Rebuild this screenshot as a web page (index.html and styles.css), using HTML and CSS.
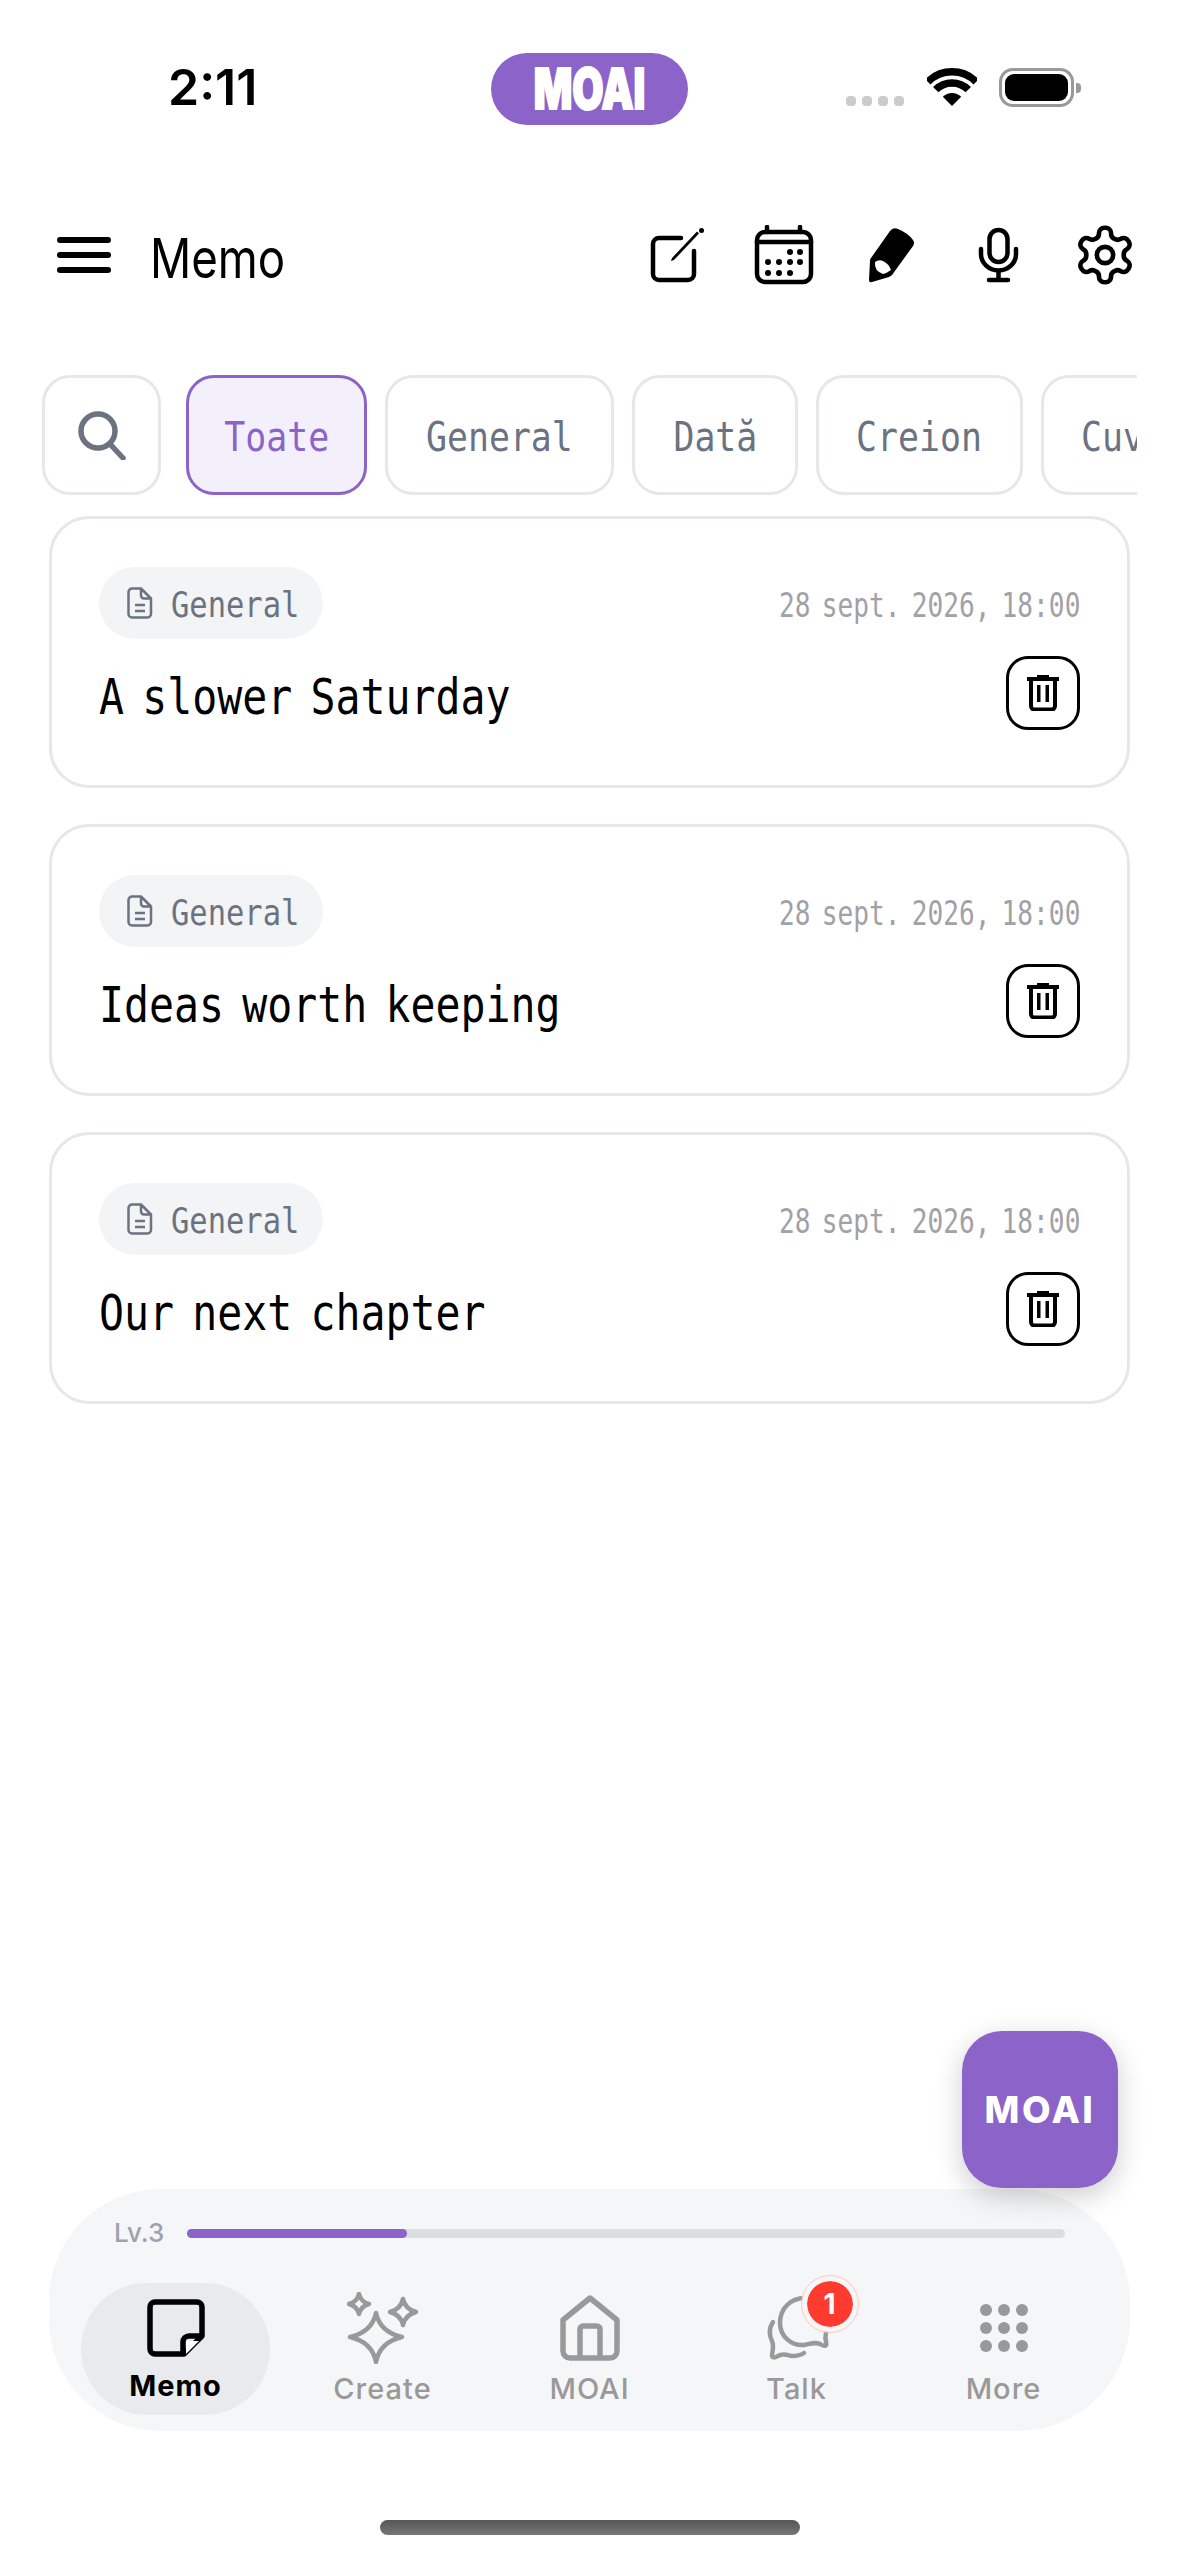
FILE: index.html
```html
<!DOCTYPE html>
<html lang="en">
<head>
    <meta charset="UTF-8">
    <meta name="viewport" content="width=device-width, initial-scale=1.0">
    <title>MOAI Memo</title>
    <link rel="stylesheet" href="styles.css">
</head>
<body>
    <div class="screen">
        <div class="status-bar">
            <span class="clock">2:11</span>
            <div class="island"><span class="island-text">MOAI</span></div>
            <div class="status-icons">
                <div class="signal"><i></i><i></i><i></i><i></i></div>
                <svg class="wifi" viewBox="0 0 50 38"><path d="M.8 13.800a34.250 34.250 0 0 1 48.400 0M8.700 21.700a23 23 0 0 1 32.600 0" fill="none" stroke="#000" stroke-width="7.500"/><path d="M25 38l-9.200-9.200a13 13 0 0 1 18.400 0z"/></svg>
                <div class="battery"><div class="battery-fill"></div></div>
            </div>
        </div>

        <header class="app-header">
            <div class="menu-icon"><i></i><i></i><i></i></div>
            <h1 class="page-title"><span class="title-text">Memo</span></h1>
            <div class="header-actions">
                <svg viewBox="0 0 60 60" class="head-icon"><path d="M34 13H12a6 6 0 0 0-6 6v30a6 6 0 0 0 6 6h29a6 6 0 0 0 6-6V26" fill="none" stroke="#000" stroke-width="4.500" stroke-linecap="round"/><path d="M24 36l1-3L50 6.500l2 2L27 35z"/><circle cx="54.500" cy="5.500" r="2.500"/></svg>
                <svg viewBox="0 0 60 60" class="head-icon"><rect x="3" y="7" width="54" height="50" rx="8" fill="none" stroke="#000" stroke-width="4.500"/><path d="M3 17h54M13 2v5M46 2v5" stroke="#000" stroke-width="4.500" stroke-linecap="round"/><g><circle cx="36" cy="27" r="3"/><circle cx="46" cy="27" r="3"/><circle cx="14" cy="37" r="3"/><circle cx="25" cy="37" r="3"/><circle cx="36" cy="37" r="3"/><circle cx="46" cy="37" r="3"/><circle cx="14" cy="48" r="3"/><circle cx="25" cy="48" r="3"/><circle cx="36" cy="48" r="3"/></g></svg>
                <svg viewBox="0 0 60 60" class="head-icon"><path d="M29 6q3-4 8-2 10 4 15 11 2 3 0 6L31 50q-1 1-3 2L11 57q-3 1-3-2l1-19q0-2 1-3z"/><path d="M14 37q4-3 8-1 6 3 8 9-4 3-8 4-9-3-8-12z" fill="#fff"/></svg>
                <svg viewBox="0 0 60 60" class="head-icon"><rect x="21.500" y="5" width="18" height="32" rx="9" fill="none" stroke="#000" stroke-width="4.500"/><path d="M13 24v5a17.500 16.500 0 0 0 35 0v-5M30.500 46v9M21 55h19" fill="none" stroke="#000" stroke-width="4.500" stroke-linecap="round"/></svg>
                <svg viewBox="1 1 22 22" class="head-icon" fill="none" stroke="#000" stroke-width="1.700" stroke-linecap="round" stroke-linejoin="round"><path d="M12.220 2h-.44a2 2 0 0 0-2 2v.18a2 2 0 0 1-1 1.730l-.43.25a2 2 0 0 1-2 0l-.15-.08a2 2 0 0 0-2.730.73l-.22.38a2 2 0 0 0 .73 2.730l.15.1a2 2 0 0 1 1 1.720v.51a2 2 0 0 1-1 1.740l-.15.09a2 2 0 0 0-.73 2.730l.22.38a2 2 0 0 0 2.730.73l.15-.08a2 2 0 0 1 2 0l.43.25a2 2 0 0 1 1 1.730V20a2 2 0 0 0 2 2h.44a2 2 0 0 0 2-2v-.18a2 2 0 0 1 1-1.730l.43-.25a2 2 0 0 1 2 0l.15.08a2 2 0 0 0 2.730-.73l.22-.39a2 2 0 0 0-.73-2.730l-.15-.08a2 2 0 0 1-1-1.740v-.5a2 2 0 0 1 1-1.740l.15-.09a2 2 0 0 0 .73-2.730l-.22-.38a2 2 0 0 0-2.730-.73l-.15.08a2 2 0 0 1-2 0l-.43-.25a2 2 0 0 1-1-1.730V4a2 2 0 0 0-2-2z"/><circle cx="12" cy="12" r="3"/></svg>
            </div>
        </header>

        <div class="filter-row">
            <div class="chip chip-search">
                <svg viewBox="0 0 50 50" class="search-icon"><circle cx="21" cy="21" r="17" fill="none" stroke="#6b7280" stroke-width="5.500"/><path d="M33 34l13 14" stroke="#6b7280" stroke-width="5.500" stroke-linecap="round"/></svg>
            </div>
            <div class="chip chip-5 active"><span class="squeeze">Toate</span></div>
            <div class="chip chip-7"><span class="squeeze">General</span></div>
            <div class="chip chip-4"><span class="squeeze">Dată</span></div>
            <div class="chip chip-6"><span class="squeeze">Creion</span></div>
            <div class="chip chip-6"><span class="squeeze">Cuvânt</span></div>
        </div>

        <div class="memo-list">
            <article class="memo-card">
                <div class="memo-top">
                    <div class="tag">
                        <svg viewBox="0 0 26 32" class="doc-icon"><path d="M5 1.500h9l10 10V27a3.500 3.500 0 0 1-3.500 3.500H5A3.500 3.500 0 0 1 1.500 27V5A3.500 3.500 0 0 1 5 1.500zM14 1.500v7a3 3 0 0 0 3 3h7M8 18h10M8 24h10" fill="none" stroke="#6b7280" stroke-width="2.500" stroke-linejoin="round"/></svg>
                        <span class="squeeze tag-text">General</span>
                    </div>
                    <span class="squeeze memo-date">28 sept. 2026, 18:00</span>
                </div>
                <div class="memo-bottom">
                    <span class="squeeze memo-title">A slower Saturday</span>
                    <button class="trash-btn"><svg viewBox="0 0 32 36" class="trash-icon"><path d="M0 2h10V0h12v2h10v4H0zM10 10h3.500v17H10zM18.500 10H22v17h-3.500z"/><path d="M4 6v25a3.500 3.500 0 0 0 3.500 3.500h17a3.500 3.500 0 0 0 3.500-3.500V6" fill="none" stroke="#000" stroke-width="4"/></svg></button>
                </div>
            </article>

            <article class="memo-card">
                <div class="memo-top">
                    <div class="tag">
                        <svg viewBox="0 0 26 32" class="doc-icon"><path d="M5 1.500h9l10 10V27a3.500 3.500 0 0 1-3.500 3.500H5A3.500 3.500 0 0 1 1.500 27V5A3.500 3.500 0 0 1 5 1.500zM14 1.500v7a3 3 0 0 0 3 3h7M8 18h10M8 24h10" fill="none" stroke="#6b7280" stroke-width="2.500" stroke-linejoin="round"/></svg>
                        <span class="squeeze tag-text">General</span>
                    </div>
                    <span class="squeeze memo-date">28 sept. 2026, 18:00</span>
                </div>
                <div class="memo-bottom">
                    <span class="squeeze memo-title">Ideas worth keeping</span>
                    <button class="trash-btn"><svg viewBox="0 0 32 36" class="trash-icon"><path d="M0 2h10V0h12v2h10v4H0zM10 10h3.500v17H10zM18.500 10H22v17h-3.500z"/><path d="M4 6v25a3.500 3.500 0 0 0 3.500 3.500h17a3.500 3.500 0 0 0 3.500-3.500V6" fill="none" stroke="#000" stroke-width="4"/></svg></button>
                </div>
            </article>

            <article class="memo-card">
                <div class="memo-top">
                    <div class="tag">
                        <svg viewBox="0 0 26 32" class="doc-icon"><path d="M5 1.500h9l10 10V27a3.500 3.500 0 0 1-3.500 3.500H5A3.500 3.500 0 0 1 1.500 27V5A3.500 3.500 0 0 1 5 1.500zM14 1.500v7a3 3 0 0 0 3 3h7M8 18h10M8 24h10" fill="none" stroke="#6b7280" stroke-width="2.500" stroke-linejoin="round"/></svg>
                        <span class="squeeze tag-text">General</span>
                    </div>
                    <span class="squeeze memo-date">28 sept. 2026, 18:00</span>
                </div>
                <div class="memo-bottom">
                    <span class="squeeze memo-title">Our next chapter</span>
                    <button class="trash-btn"><svg viewBox="0 0 32 36" class="trash-icon"><path d="M0 2h10V0h12v2h10v4H0zM10 10h3.500v17H10zM18.500 10H22v17h-3.500z"/><path d="M4 6v25a3.500 3.500 0 0 0 3.500 3.500h17a3.500 3.500 0 0 0 3.500-3.500V6" fill="none" stroke="#000" stroke-width="4"/></svg></button>
                </div>
            </article>
        </div>

        <nav class="tab-bar">
            <div class="level-row">
                <span class="level-label">Lv.3</span>
                <div class="level-track"><div class="level-fill" style="width: 25%"></div></div>
            </div>
            <div class="tabs">
                <div class="tab active">
                    <div class="tab-art">
                        <svg viewBox="0 0 58 58" class="tab-icon"><path d="M8 3h42a5 5 0 0 1 5 5v29L37 55H8a5 5 0 0 1-5-5V8a5 5 0 0 1 5-5z" fill="none" stroke="#000" stroke-width="5.500" stroke-linejoin="round"/><path d="M39 42h13L39 55z" fill="#fff"/><path d="M55 37H42a6 6 0 0 0-6 6v12" fill="none" stroke="#000" stroke-width="5.500"/></svg>
                    </div>
                    <span>Memo</span>
                </div>
                <div class="tab">
                    <div class="tab-art">
                        <svg viewBox="0 0 72 72" class="create-icon" fill="none" stroke="#999" stroke-width="4.500" stroke-linejoin="round"><path d="M29 21q4 19 26 24-22 5-26 25-4-20-26-25 22-5 26-24z"/><path d="M12 2q2 8 10 10-8 2-10 10-2-8-10-10 8-2 10-10z"/><path d="M56 7q2 10 13 13-11 3-13 13-2-10-13-13 11-3 13-13z"/></svg>
                    </div>
                    <span>Create</span>
                </div>
                <div class="tab">
                    <div class="tab-art">
                        <svg viewBox="0 0 60 66" class="house-icon" fill="none" stroke="#999" stroke-width="5.500" stroke-linejoin="round"><path d="M30 3L3 25v31a7 7 0 0 0 7 7h40a7 7 0 0 0 7-7V25z"/><path d="M20 63V34a3 3 0 0 1 3-3h14a3 3 0 0 1 3 3v29"/></svg>
                    </div>
                    <span>MOAI</span>
                </div>
                <div class="tab">
                    <div class="tab-art">
                        <div class="talk-icon">
                            <svg viewBox="-4 -2 70 70" class="talk-svg" fill="none" stroke="#999" stroke-width="4.500" stroke-linecap="round"><path d="M39 3C24 3 14 14 14 28c0 14 12 23 24 22 6-1 12-4 18 0 4 2 5 0 4-3-1-4-1-5 0-9"/><path d="M7 27c-4 6-4 13-1 19 2 4 1 9 0 14 0 3 3 3 6 1 5-3 9-1 14 0 4 0 9-1 12-3"/></svg>
                            <span class="badge">1</span>
                        </div>
                    </div>
                    <span>Talk</span>
                </div>
                <div class="tab">
                    <div class="tab-art">
                        <div class="dots-icon"><i></i><i></i><i></i><i></i><i></i><i></i><i></i><i></i><i></i></div>
                    </div>
                    <span>More</span>
                </div>
            </div>
        </nav>

        <button class="fab">MOAI</button>
        <div class="home-indicator"></div>
    </div>
</body>
</html>
```

FILE: styles.css
```css
* {
    margin: 0;
    padding: 0;
    box-sizing: border-box;
}

body {
    font-family: 'Inter', 'Liberation Sans', sans-serif;
    background: #fff;
    color: #000;
}

.screen {
    position: relative;
    width: 1179px;
    height: 2556px;
    display: flex;
    flex-direction: column;
    overflow: hidden;
}

/* the app font is a narrow mono, none is installed so squeeze one */
.squeeze {
    display: inline-block;
    font-family: 'DejaVu Sans Mono', monospace;
    white-space: nowrap;
    transform: scaleX(0.85);
}

/* status bar */
.status-bar {
    height: 125px;
    padding-top: 53px;
    display: flex;
    align-items: flex-start;
    position: relative;
}

.clock {
    position: absolute;
    left: 168px;
    top: 57px;
    font-size: 50px;
    font-weight: 600;
    line-height: 60px;
}

.island {
    width: 197px;
    height: 72px;
    margin-left: 491px;
    border-radius: 36px;
    background: #8c63c9;
    display: flex;
    align-items: center;
    justify-content: center;
}

.island-text {
    color: #fff;
    font-size: 56px;
    font-weight: 900;
    line-height: 72px;
    -webkit-text-stroke: 2px #fff;
    transform: scaleX(0.72);
}

.status-icons {
    position: absolute;
    left: 846px;
    top: 68px;
    display: flex;
    align-items: flex-end;
}

.signal {
    display: flex;
    gap: 6px;
    margin-bottom: 1px;
}

.signal i {
    width: 10px;
    height: 10px;
    border-radius: 4px;
    background: #ccc;
}

.wifi {
    width: 50px;
    height: 38px;
    margin-left: 23px;
    margin-bottom: 1px;
}

.battery {
    position: relative;
    width: 75px;
    height: 39px;
    margin-left: 22px;
    border: 3px solid #999;
    border-radius: 14px;
    padding: 3px;
}

.battery::after {
    content: "";
    position: absolute;
    right: -10px;
    top: 12px;
    width: 5px;
    height: 10px;
    background: #999;
    border-radius: 0 4px 4px 0;
}

.battery-fill {
    width: 100%;
    height: 100%;
    background: #000;
    border-radius: 9px;
}

/* header */
.app-header {
    height: 100px;
    margin-top: 80px;
    padding: 0 44px 0 57px;
    display: flex;
    align-items: center;
}

.menu-icon {
    width: 54px;
    display: flex;
    flex-direction: column;
    gap: 8.500px;
}

.menu-icon i {
    height: 6.500px;
    border-radius: 4px;
    background: #000;
}

.page-title {
    margin-left: 39px;
    font-size: 55px;
    font-weight: 400;
    line-height: 70px;
}

.title-text {
    display: inline-block;
    transform: scaleX(0.83);
    transform-origin: left;
    padding-top: 6px;
}

.header-actions {
    margin-left: auto;
    display: flex;
    gap: 47px;
}

.head-icon {
    width: 60px;
    height: 60px;
}

/* filter chips */
.filter-row {
    width: 1095px;
    margin-top: 70px;
    margin-left: 42px;
    display: flex;
    gap: 18px;
    overflow: hidden;
}

.chip {
    flex: none;
    height: 120px;
    padding-top: 3px;
    border: 3px solid #e5e7eb;
    border-radius: 28px;
    background: #fff;
    color: #6b7280;
    font-size: 41px;
    display: flex;
    align-items: center;
    justify-content: center;
}

.chip.active {
    border-color: #8c63c9;
    background: #f4f0fb;
    color: #8c63c9;
}

.chip-search {
    width: 119px;
    margin-right: 7px;
    padding-top: 0;
}

.chip-4 { width: 166px; }
.chip-5 { width: 181px; }
.chip-6 { width: 207px; }
.chip-7 { width: 229px; }

.search-icon {
    width: 50px;
    height: 50px;
}

/* memo cards */
.memo-list {
    margin: 21px 49px 0 49px;
    display: flex;
    flex-direction: column;
    gap: 36px;
}

.memo-card {
    height: 272px;
    padding: 48px 47px 0;
    border: 3px solid #e5e7eb;
    border-radius: 40px;
}

.memo-top {
    display: flex;
    align-items: center;
    justify-content: space-between;
}

.tag {
    width: 224px;
    height: 72px;
    padding-left: 28px;
    border-radius: 36px;
    background: #f3f4f6;
    display: flex;
    align-items: center;
    gap: 18px;
}

.doc-icon {
    flex: none;
    width: 26px;
    height: 32px;
}

.tag-text {
    color: #6b7280;
    font-size: 35px;
    transform: scaleX(0.87);
    transform-origin: left;
    padding-top: 3px;
}

.memo-date {
    color: #a1a1a6;
    font-size: 34px;
    word-spacing: -6px;
    transform: scaleX(0.77);
    transform-origin: right;
    padding-top: 3px;
}

.memo-bottom {
    margin-top: 17px;
    display: flex;
    align-items: center;
    justify-content: space-between;
}

.memo-title {
    font-size: 50px;
    word-spacing: -8px;
    transform: scaleX(0.83);
    transform-origin: left;
    padding-top: 8px;
}

.trash-btn {
    flex: none;
    width: 74px;
    height: 74px;
    border: 3px solid #000;
    border-radius: 22px;
    background: #fff;
    display: flex;
    align-items: center;
    justify-content: center;
}

.trash-icon {
    width: 32px;
    height: 36px;
}

/* bottom tab bar */
.tab-bar {
    position: absolute;
    left: 49px;
    top: 2189px;
    width: 1081px;
    height: 242px;
    padding: 0 65px 0 32px;
    border-radius: 112px;
    background: #f5f6f7;
}

.level-row {
    height: 94px;
    padding: 20px 0 0 33px;
    display: flex;
    align-items: flex-start;
    gap: 23px;
}

.level-label {
    color: #9ca3af;
    font-size: 26px;
    font-weight: 500;
    line-height: 48px;
}

.level-track {
    flex: 1;
    height: 9px;
    margin-top: 20px;
    border-radius: 5px;
    background: #dcdde1;
}

.level-fill {
    height: 100%;
    border-radius: 5px;
    background: #8c63c9;
}

.tabs {
    display: flex;
}

.tab {
    flex: none;
    width: 207px;
    height: 132px;
    padding-top: 5px;
    color: #999;
    font-size: 29px;
    font-weight: 500;
    letter-spacing: 1px;
    line-height: 30px;
    display: flex;
    flex-direction: column;
    align-items: center;
    gap: 6px;
}

.tab.active {
    width: 189px;
    margin-right: 9px;
    border-radius: 66px;
    background: #e9eaed;
    color: #000;
    font-weight: 700;
    gap: 3px;
}

/* every tab icon is centred on one line, whatever its height */
.tab-art {
    height: 80px;
    display: flex;
    align-items: center;
    justify-content: center;
}

.tab-icon {
    width: 58px;
    height: 58px;
}

.create-icon {
    width: 72px;
    height: 72px;
}

.house-icon {
    width: 60px;
    height: 66px;
}

.talk-icon {
    position: relative;
    width: 70px;
    height: 70px;
}

.talk-svg {
    width: 70px;
    height: 70px;
}

.badge {
    position: absolute;
    left: 40px;
    top: -17px;
    width: 56px;
    height: 56px;
    border: 5px solid #f5f6f7;
    outline: 1px solid #ffc9c5;
    background: #ff3b30;
    background-clip: padding-box;
    border-radius: 50%;
    color: #fff;
    font-size: 28px;
    font-weight: 700;
    letter-spacing: 0;
    line-height: 46px;
    text-align: center;
}

.dots-icon {
    display: grid;
    grid-template-columns: repeat(3, 12px);
    grid-auto-rows: 12px;
    gap: 6px;
}

.dots-icon i {
    border-radius: 50%;
    background: #999;
}

.fab {
    position: absolute;
    left: 962px;
    top: 2031px;
    width: 156px;
    height: 157px;
    border: none;
    border-radius: 40px;
    background: #8c63c9;
    color: #fff;
    font-family: 'Inter', sans-serif;
    font-size: 37px;
    font-weight: 800;
    letter-spacing: 2.500px;
    box-shadow: 0 8px 28px rgba(0, 0, 0, 0.2);
}

.home-indicator {
    position: absolute;
    left: 380px;
    top: 2520px;
    width: 420px;
    height: 15px;
    border-radius: 8px;
    background: linear-gradient(#555, #777);
}
```
